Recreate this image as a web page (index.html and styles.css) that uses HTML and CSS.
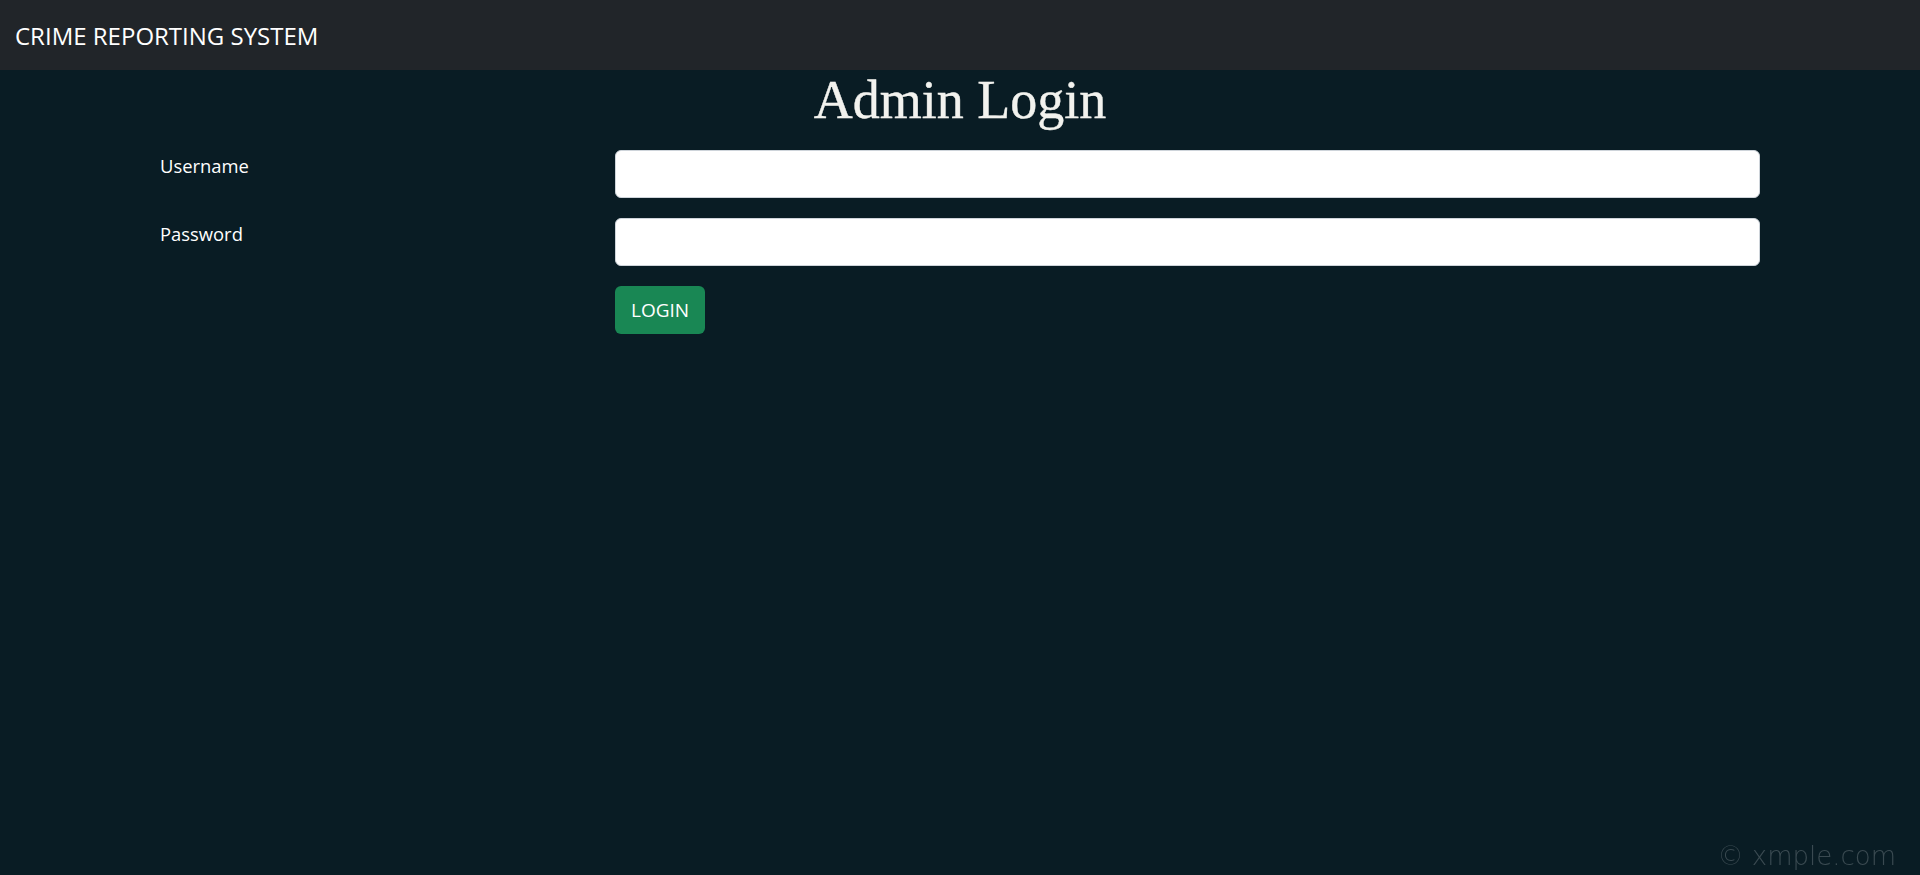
FILE: index.html
```html
<!DOCTYPE html>
<html lang="en">
<head>
<meta charset="utf-8">
<title>Admin Login</title>
<link rel="stylesheet" href="styles.css">
</head>
<body>
<nav class="navbar">
  <a class="brand" href="#">CRIME REPORTING SYSTEM</a>
</nav>
<main class="page">
  <h1 class="title">Admin Login</h1>
  <form class="login-form">
    <div class="form-row">
      <label class="form-label" for="username">Username</label>
      <input class="form-input" id="username" type="text">
    </div>
    <div class="form-row">
      <label class="form-label" for="password">Password</label>
      <input class="form-input" id="password" type="password">
    </div>
    <div class="form-row">
      <span></span>
      <div><button class="btn-login" type="submit">LOGIN</button></div>
    </div>
  </form>
</main>
<div class="watermark">© xmple.com</div>
</body>
</html>
```
FILE: styles.css
```css
* { box-sizing: border-box; }
html, body { height: 100%; }
body {
  margin: 0;
  background: #091c24;
  color: #fff;
  font-family: "Open Sans", "Noto Sans", sans-serif;
  overflow: hidden;
}
.navbar {
  height: 70px;
  background: #212529;
  display: flex;
  align-items: center;
  padding: 0 15px;
}
.brand {
  color: #fff;
  text-decoration: none;
  font-size: 24px;
  letter-spacing: 0;
}
.page {
  padding: 0 160px;
}
.title {
  margin: 0;
  text-align: center;
  font-family: "Liberation Serif", "DejaVu Serif", serif;
  font-weight: 400;
  font-size: 54px;
  line-height: 60px;
  color: #f2f2ee;
  padding-top: 0;
  margin-bottom: 20px;
  -webkit-text-stroke: 0.4px #f2f2ee;
}
.form-row {
  display: grid;
  grid-template-columns: 455px 1fr;
  margin-bottom: 20px;
}
.form-label {
  font-size: 18.4px;
  line-height: 26px;
  padding-top: 3px;
}
.form-input {
  height: 48px;
  width: 100%;
  border: 1px solid #ced4da;
  border-radius: 6px;
  background: #fff;
  font-size: 20px;
  padding: 8px 16px;
}
.btn-login {
  height: 48px;
  padding: 0 16px;
  border: 0;
  border-radius: 6px;
  background: #198754;
  color: #fff;
  font-family: "Open Sans", "Noto Sans", sans-serif;
  font-size: 19px;
}
.watermark {
  position: fixed;
  right: 24px;
  bottom: 4px;
  font-family: "DejaVu Sans", sans-serif;
  font-weight: 200;
  font-size: 26px;
  color: #3a4a51;
}
```
